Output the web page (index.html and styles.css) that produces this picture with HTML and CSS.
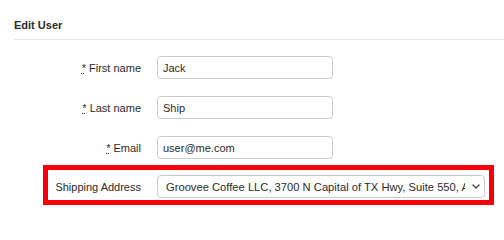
FILE: index.html
```html
<!DOCTYPE html>
<html lang="en">
<head>
<meta charset="utf-8">
<title>Edit User</title>
<link rel="stylesheet" href="styles.css">
</head>
<body>
<div class="panel">
  <div class="panel-header">Edit User</div>
  <form class="form">
    <div class="field">
      <label class="field-label" for="first"><abbr title="required">*</abbr> First name</label>
      <input class="text-input" id="first" type="text" value="Jack">
    </div>
    <div class="field">
      <label class="field-label" for="last"><abbr title="required">*</abbr> Last name</label>
      <input class="text-input" id="last" type="text" value="Ship">
    </div>
    <div class="field">
      <label class="field-label" for="email"><abbr title="required">*</abbr> Email</label>
      <input class="text-input" id="email" type="text" value="user@me.com">
    </div>
    <div class="field field-highlight">
      <label class="field-label" for="ship">Shipping Address</label>
      <div class="select-wrap">
        <select class="select-input" id="ship">
          <option>Groovee Coffee LLC, 3700 N Capital of TX Hwy, Suite 550, Austin, TX 78746</option>
        </select>
        <svg class="select-chevron" width="8" height="5" viewBox="0 0 8 5" aria-hidden="true">
          <path d="M1 1 L4 4 L7 1" fill="none" stroke="#444" stroke-width="1.4" stroke-linecap="round" stroke-linejoin="round"/>
        </svg>
      </div>
    </div>
  </form>
</div>
</body>
</html>
```
FILE: styles.css
```css
* {
  box-sizing: border-box;
}

body {
  margin: 0;
  background: #fff;
  color: #2b2b2b;
  font-family: "Liberation Sans", Arial, Helvetica, sans-serif;
  font-size: 11px;
}

.panel-header {
  margin-left: 14px;
  padding: 18px 0 6px;
  line-height: 15px;
  font-weight: bold;
  color: #2b2b2b;
  border-bottom: 1px solid #e8e8e8;
}

.form {
  display: flex;
  flex-direction: column;
  padding-top: 16px;
}

.field {
  display: grid;
  grid-template-columns: 141px 176px;
  column-gap: 16px;
  align-items: center;
}

.field + .field {
  margin-top: 17px;
}

.field-label {
  text-align: right;
  color: #2b2b2b;
  white-space: nowrap;
}

.field-label abbr {
  text-decoration: underline dotted;
  cursor: help;
}

.text-input {
  height: 23px;
  width: 176px;
  border: 1px solid #ccc;
  border-radius: 4px;
  padding: 0 5px;
  font-family: inherit;
  font-size: 11px;
  color: #2b2b2b;
  background: #fff;
  outline: none;
}

.field-highlight {
  align-self: flex-start;
  margin-left: 43px;
  grid-template-columns: 93px 328px;
  padding: 5px 4px 2px 0;
  border: 5px solid #f5000b;
}

.field.field-highlight {
  margin-top: 6px;
}

.select-wrap {
  position: relative;
  width: 328px;
}

.select-input {
  appearance: none;
  -webkit-appearance: none;
  display: block;
  width: 328px;
  height: 23px;
  border: 1px solid #ccc;
  border-radius: 4px;
  padding: 0 19px 0 8px;
  font-family: inherit;
  font-size: 11.2px;
  color: #2b2b2b;
  background: #fff;
  outline: none;
}

.select-chevron {
  position: absolute;
  right: 5px;
  top: 9px;
  pointer-events: none;
}
```
